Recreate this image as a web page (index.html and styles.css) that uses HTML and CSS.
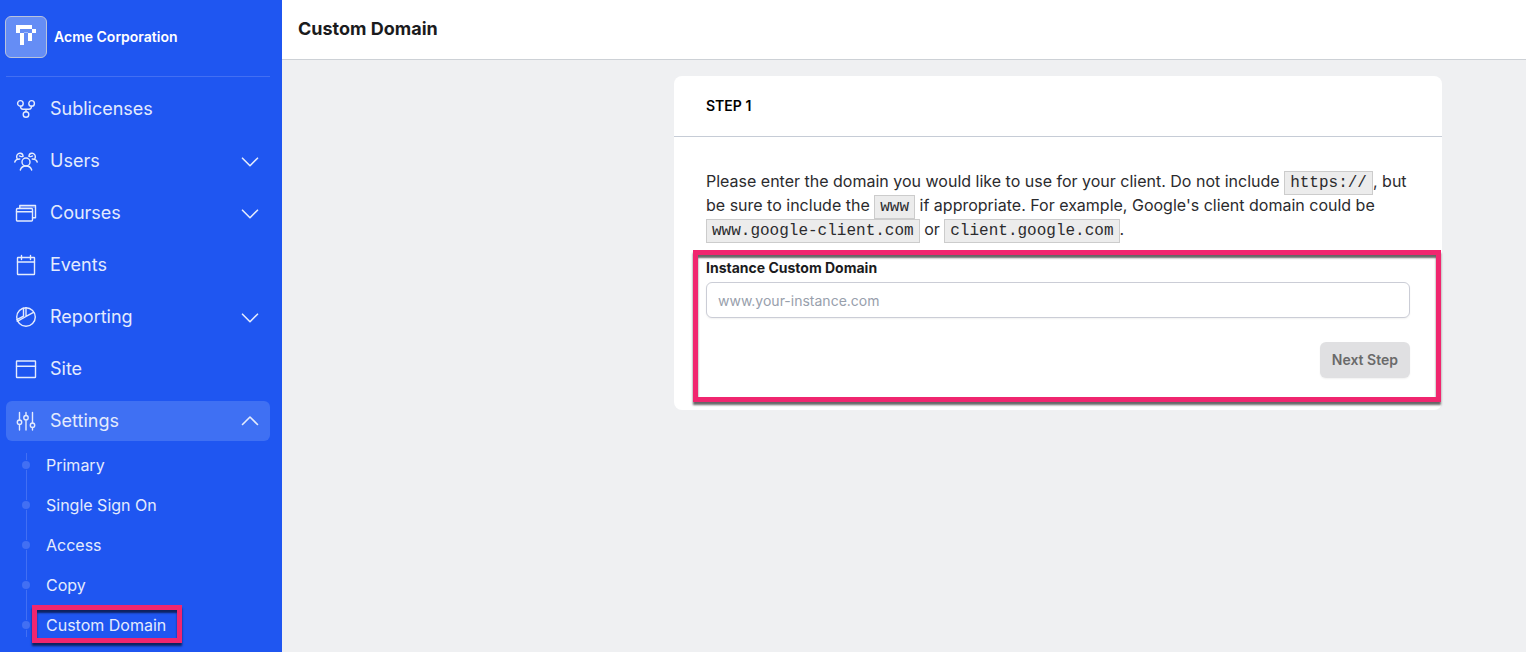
FILE: index.html
```html
<!DOCTYPE html>
<html lang="en">
<head>
<meta charset="utf-8">
<meta name="viewport" content="width=device-width, initial-scale=1">
<title>Custom Domain</title>
<link rel="stylesheet" href="styles.css">
</head>
<body>
<div class="app">
  <aside class="sidebar">
    <a class="brand" href="#">
      <span class="logo">
        <svg width="20" height="20" viewBox="0 0 20 20" fill="currentColor" aria-hidden="true" shape-rendering="crispEdges"><path d="M0 0h16v4H4v4H0zM16 4h4v4h-4zM4 8h4v12H4zM12 8h4v8h-4z"/><path d="M8 7h4v1H8z" opacity=".4"/></svg>
      </span>
      <span>Acme Corporation</span>
    </a>
    <nav class="nav" aria-label="Main">
      <a class="nav-item" href="#">
        <svg class="icon" viewBox="0 0 24 24" aria-hidden="true"><circle cx="6.400" cy="6.400" r="2.800"/><circle cx="17.600" cy="6.400" r="2.800"/><circle cx="12" cy="17.500" r="2.800"/><path d="M6.500 9.200c0 2 .8 3 2.500 3h6c1.700 0 2.500-1 2.500-3M12 12.200v2.500"/></svg>
        <span>Sublicenses</span>
      </a>
      <button class="nav-item" type="button" aria-expanded="false">
        <svg class="icon" viewBox="0 0 24 24" aria-hidden="true"><circle cx="12" cy="13" r="4"/><path d="M6.300 21c.8-2.600 2.600-4 5.700-4s4.900 1.400 5.700 4M3.200 9.800C1.600 6.500 4.100 4 6.300 4.300c1.700.2 2.700 1.300 2.800 3-1.600.6-2.800.3-3.600-.3M.8 13c.5-1.900 2.100-3 5-3M20.800 9.800c1.600-3.300-.9-5.800-3.100-5.500-1.700.2-2.700 1.300-2.800 3 1.600.6 2.800.3 3.600-.3M23.200 13c-.5-1.900-2.100-3-5-3"/></svg>
        <span>Users</span>
        <svg class="chevron" viewBox="0 0 20 20" aria-hidden="true"><path d="M2.500 7.200 10 14.700l7.500-7.500"/></svg>
      </button>
      <button class="nav-item" type="button" aria-expanded="false">
        <svg class="icon" viewBox="0 0 24 24" aria-hidden="true"><rect x="2.500" y="7.500" width="16" height="12.500" rx="1"/><path d="M2.500 10.800h16M5.800 7V4.500h15.700v12.200h-2.500"/><path class="soft" d="M6 6h14.500"/></svg>
        <span>Courses</span>
        <svg class="chevron" viewBox="0 0 20 20" aria-hidden="true"><path d="M2.500 7.200 10 14.700l7.500-7.500"/></svg>
      </button>
      <a class="nav-item" href="#">
        <svg class="icon" viewBox="0 0 24 24" aria-hidden="true"><rect x="3.500" y="4.500" width="17" height="17" rx=".5"/><path d="M3.500 9h17M7.500 2.500v4M16.500 2.500v4"/></svg>
        <span>Events</span>
      </a>
      <button class="nav-item" type="button" aria-expanded="false">
        <svg class="icon" viewBox="0 0 24 24" aria-hidden="true"><circle cx="12" cy="12" r="9.300"/><path d="M12 2.700v8.600l7.500-4M9.500 3.200v8l-6.600 3.500M3.300 16.300 12 11.500"/></svg>
        <span>Reporting</span>
        <svg class="chevron" viewBox="0 0 20 20" aria-hidden="true"><path d="M2.500 7.200 10 14.700l7.500-7.500"/></svg>
      </button>
      <a class="nav-item" href="#">
        <svg class="icon" viewBox="0 0 24 24" aria-hidden="true"><rect x="2.500" y="4" width="19" height="16.500" rx=".5"/><path d="M2.500 9.200h19"/></svg>
        <span>Site</span>
      </a>
      <button class="nav-item nav-item-open" type="button" aria-expanded="true">
        <svg class="icon" viewBox="0 0 24 24" aria-hidden="true"><path d="M5.500 3.500v7.500M5.500 15.500v5.500M12 3.500v3M12 10.500V21M18.500 3.500v10.500M18.500 18.500V21"/><circle cx="5.500" cy="13.200" r="2.200"/><circle cx="12" cy="8.700" r="2.200"/><circle cx="18.500" cy="16.200" r="2.200"/></svg>
        <span>Settings</span>
        <svg class="chevron" viewBox="0 0 20 20" aria-hidden="true"><path d="M2.500 13.500 10 6l7.500 7.500"/></svg>
      </button>
    </nav>
    <ul class="subnav">
      <li><a href="#">Primary</a></li>
      <li><a href="#">Single Sign On</a></li>
      <li><a href="#">Access</a></li>
      <li><a href="#">Copy</a></li>
      <li><a class="marked" href="#" aria-current="page">Custom Domain</a></li>
    </ul>
  </aside>
  <div class="page">
    <header class="topbar"><h1>Custom Domain</h1></header>
    <main class="content">
      <section class="card">
        <h2 class="card-title">STEP 1</h2>
        <div class="card-body">
          <p class="intro">Please enter the domain you would like to use for your client. Do not include <code>https://</code>, but be sure to include the <code>www</code> if appropriate. For example, Google's client domain could be <code>www.google-client.com</code> or <code>client.google.com</code>.</p>
          <form class="form">
            <label for="domain">Instance Custom Domain</label>
            <input id="domain" type="text" placeholder="www.your-instance.com">
            <button class="next" type="button" disabled>Next Step</button>
          </form>
        </div>
      </section>
    </main>
  </div>
</div>
</body>
</html>
```
FILE: styles.css
```css
* {
  box-sizing: border-box;
}

body {
  margin: 0;
  font-family: Inter, "Liberation Sans", sans-serif;
  font-size: 16px;
  line-height: 24px;
  color: #2b2b2e;
}

h1,
h2,
p,
ul {
  margin: 0;
  padding: 0;
}

a {
  color: inherit;
  text-decoration: none;
}

button,
input {
  font: inherit;
}

.app {
  display: flex;
  min-height: 100vh;
}

/* Sidebar */
.sidebar {
  flex: 0 0 282px;
  padding: 16px 12px 0 6px;
  background: #1f56f1;
  color: #e4ebfd;
}

.brand {
  display: flex;
  align-items: center;
  gap: 7px;
  padding-bottom: 18px;
  border-bottom: 1px solid #426ff3;
  color: #fff;
  font-size: 14px;
  font-weight: 600;
}

.logo {
  display: flex;
  justify-content: center;
  width: 42px;
  height: 42px;
  margin-left: -1px;
  padding-top: 8px;
  border: 1px solid #b9c3dc;
  border-radius: 6px;
  background: #658df5;
}

.nav {
  display: flex;
  flex-direction: column;
  gap: 12px;
  padding-top: 12px;
}

.nav-item {
  display: flex;
  align-items: center;
  gap: 12px;
  width: 100%;
  height: 40px;
  padding: 0 10px 0 8px;
  border: 0;
  border-radius: 6px;
  background: none;
  color: inherit;
  font-size: 18px;
  text-align: left;
}

.nav-item-open {
  background: #3f70f3;
}

.icon,
.chevron {
  fill: none;
  stroke: currentColor;
  stroke-linecap: round;
  stroke-linejoin: round;
}

.icon {
  width: 24px;
  height: 24px;
  stroke-width: 1.4;
}

.soft {
  opacity: 0.4;
}

.chevron {
  width: 20px;
  height: 20px;
  margin-left: auto;
  stroke-width: 1.6;
}

.subnav {
  position: relative;
  margin-top: 4px;
  padding-left: 16px;
  list-style: none;
}

.subnav::before {
  content: "";
  position: absolute;
  top: 8px;
  bottom: 8px;
  left: 20px;
  width: 1px;
  background: #426ff3;
}

.subnav li {
  display: flex;
  align-items: center;
  gap: 16px;
  height: 40px;
}

.subnav li::before {
  content: "";
  position: relative;
  width: 8px;
  height: 8px;
  border-radius: 50%;
  background: #426ff3;
  box-shadow: 0 0 0 1px #1f56f1;
}

.marked,
.form {
  position: relative;
}

.marked::after,
.form::after {
  content: "";
  position: absolute;
  border: 5px solid #f0266f;
  box-shadow: 0 3px 2px rgba(0, 0, 0, 0.6), inset 0 3px 2px rgba(0, 0, 0, 0.6);
  pointer-events: none;
}

.marked::after {
  inset: -8px -16px -6px -14px;
}

/* Page */
.page {
  flex: 1;
  min-width: 0;
  background: #eff0f2;
}

.topbar {
  padding: 17px 16px 18px;
  border-bottom: 1px solid #cdd1d6;
  background: #fff;
}

.topbar h1 {
  color: #1b1b1d;
  font-size: 18px;
  font-weight: 700;
}

.content {
  padding: 16px 84px 16px 16px;
}

.card {
  max-width: 768px;
  margin-left: auto;
  border-radius: 8px;
  background: #fff;
}

.card-title {
  padding: 18px 32px;
  border-bottom: 1px solid #c6ccd6;
  color: #000;
  font-size: 14px;
  font-weight: 600;
}

.card-body {
  padding: 32px;
}

code {
  padding: 2px 5px;
  border: 1px solid #ccc;
  background: #ececec;
  font-family: "Liberation Mono", monospace;
  font-size: 16px;
  line-height: 16px;
}

.form {
  display: flex;
  flex-direction: column;
  margin-top: 17px;
}

.form::after {
  inset: -8px -31px -24px -13px;
}

.form label {
  color: #1b1b1d;
  font-size: 14px;
  font-weight: 700;
  line-height: 20px;
}

.form input {
  height: 36px;
  margin-top: 4px;
  padding: 0 11px;
  border: 1px solid #cbcdd6;
  border-radius: 6px;
  background: #fff;
  box-shadow: 0 1px 2px rgba(0, 0, 0, 0.06);
  color: #2b2b2e;
  font-size: 14px;
}

.form input::placeholder {
  color: #98a0ac;
  opacity: 1;
}

.next {
  align-self: flex-end;
  height: 36px;
  margin-top: 24px;
  padding: 0 12px;
  border: 0;
  border-radius: 6px;
  background: #e0e0e2;
  box-shadow: 0 1px 2px rgba(0, 0, 0, 0.06);
  color: #6a6a6a;
  font-size: 14px;
  font-weight: 600;
}
```
